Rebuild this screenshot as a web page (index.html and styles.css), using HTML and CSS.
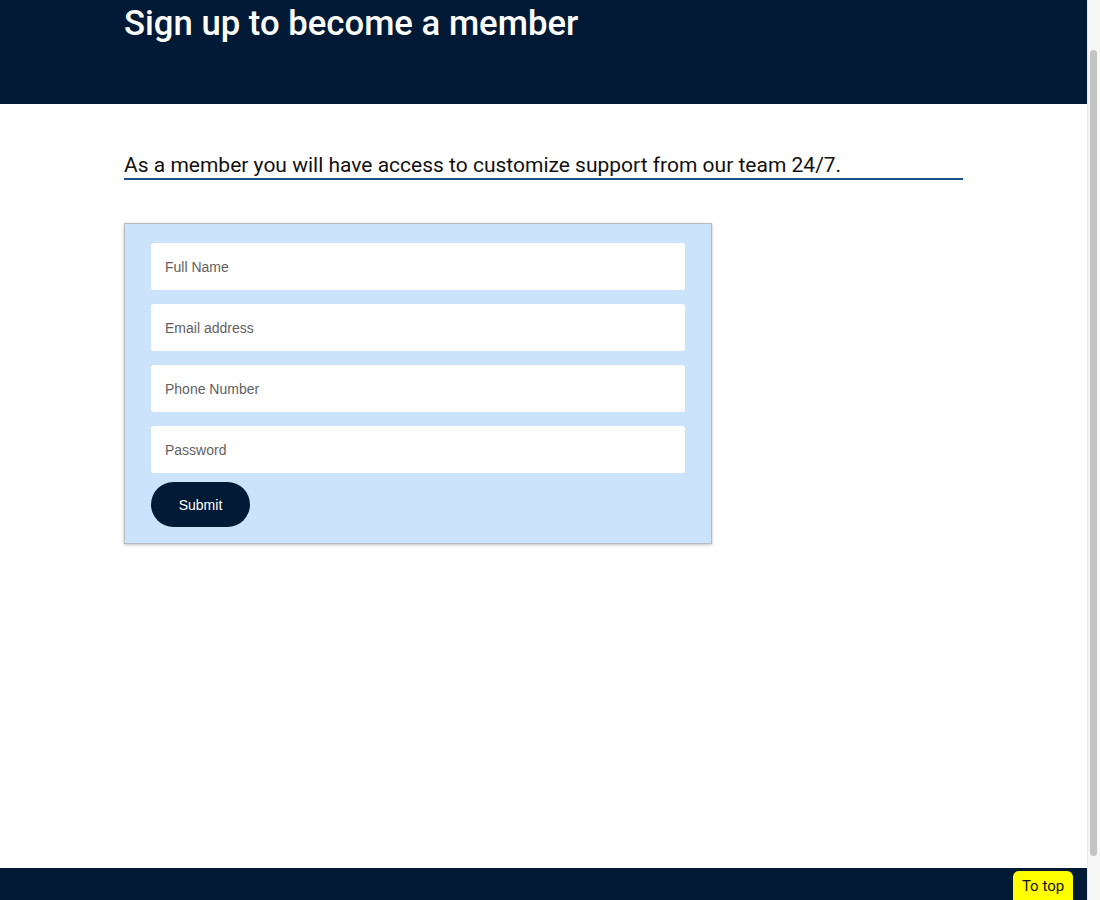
FILE: index.html
```html
<!DOCTYPE html>
<html lang="en">
<head>
<meta charset="utf-8">
<title>Sign up</title>
<link rel="stylesheet" href="styles.css">
</head>
<body>
<div class="window">
  <div class="page">
    <header class="site-header">
      <h1 class="title">Sign up to become a member</h1>
    </header>
    <main class="content">
      <p class="lead">As a member you will have access to customize support from our team 24/7.</p>
      <form class="signup-card">
        <input class="field" type="text" placeholder="Full Name">
        <input class="field" type="email" placeholder="Email address">
        <input class="field" type="tel" placeholder="Phone Number">
        <input class="field" type="password" placeholder="Password">
        <button class="submit" type="button">Submit</button>
      </form>
    </main>
    <footer class="site-footer">
      <a class="to-top" href="#">To top</a>
    </footer>
  </div>
  <div class="scrollbar" aria-hidden="true">
    <div class="scroll-thumb"></div>
  </div>
</div>
</body>
</html>
```
FILE: styles.css
```css
body {
  margin: 0;
  font-family: Roboto, "Liberation Sans", Arial, sans-serif;
  background: #ffffff;
  color: #111111;
}
.window {
  display: flex;
  height: 100vh;
  overflow: hidden;
}
.page {
  flex: 1;
  display: flex;
  flex-direction: column;
  min-width: 0;
}
.scrollbar {
  width: 13px;
  flex: none;
  background: #f7f7f7;
  border-left: 1px solid #e8e8e8;
  box-sizing: border-box;
  padding: 50px 3px 0 2px;
}
.scroll-thumb {
  height: 806px;
  background: #c4c4c4;
  border-radius: 4px;
}
.site-header {
  background: #021a35;
  height: 104px;
  padding: 3px 124px 0;
  box-sizing: border-box;
}
.title {
  margin: 0;
  color: #ffffff;
  font-size: 34.7px;
  line-height: 41px;
  font-weight: 500;
}
.content {
  flex: 1;
  padding: 0 124px;
}
.lead {
  margin: 48px 0 0;
  font-size: 21px;
  line-height: 26px;
  color: #111111;
  border-bottom: 2px solid #1d4f8c;
}
.signup-card {
  margin-top: 43px;
  width: 588px;
  box-sizing: border-box;
  background: #cce4fb;
  border: 1px solid #b8bcc2;
  box-shadow: 0 1px 3px rgba(0, 0, 0, 0.25);
  padding: 19px 26px 16px;
  display: flex;
  flex-direction: column;
  align-items: flex-start;
  gap: 14px;
}
.field {
  width: 100%;
  height: 47px;
  box-sizing: border-box;
  border: none;
  border-radius: 3px;
  background: #ffffff;
  padding: 0 14px;
  font-family: "Liberation Sans", Arial, sans-serif;
  font-size: 14px;
  color: #333333;
}
.field::placeholder {
  color: #5f5f5f;
}
.submit {
  margin-top: -5px;
  width: 99px;
  height: 45px;
  border: none;
  border-radius: 23px;
  background: #021a35;
  color: #ffffff;
  font-family: "Liberation Sans", Arial, sans-serif;
  font-size: 14px;
  cursor: pointer;
}
.site-footer {
  position: relative;
  background: #021a35;
  height: 32px;
  flex: none;
}
.to-top {
  position: absolute;
  right: 14px;
  top: 3px;
  width: 60px;
  height: 32px;
  box-sizing: border-box;
  background: #ffff00;
  border-radius: 6px 6px 0 0;
  color: #111111;
  text-decoration: none;
  font-size: 15px;
  line-height: 31px;
  text-align: center;
}
```
